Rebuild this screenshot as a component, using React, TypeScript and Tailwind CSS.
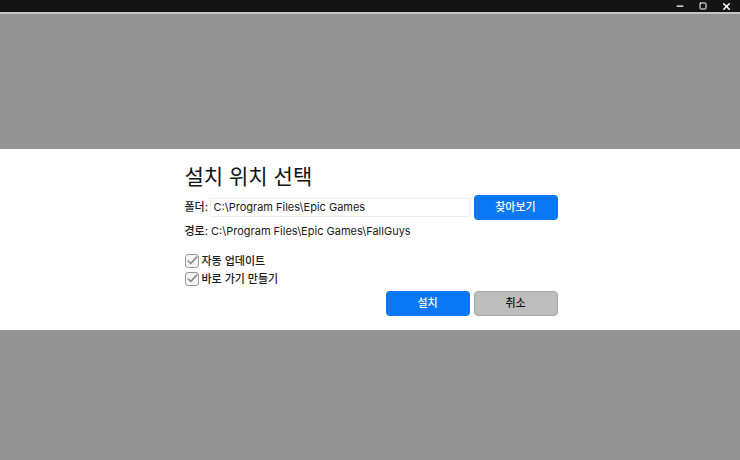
import { Minus, Square, X } from 'lucide-react';

function Check() {
  return (
    <span className="flex items-center justify-center w-[14px] h-[14px] rounded-[3px] border border-[#9a9a9a] bg-[#f4f4f4]">
      <svg viewBox="0 0 14 14" className="w-[12px] h-[12px]">
        <path d="M2.5 7 L5.5 10 L12.5 2.5" fill="none" stroke="#8a8a8a" strokeWidth="1.8" strokeLinecap="round" strokeLinejoin="round" />
      </svg>
    </span>
  );
}

export default function App() {
  const font = { fontFamily: 'Inter, "Noto Sans CJK KR", sans-serif' };
  return (
    <div className="w-[740px] h-[460px] flex flex-col bg-[#939393] overflow-hidden" style={font}>
      {/* title bar */}
      <div className="h-[12px] bg-[#141414] flex justify-end items-center gap-[14px] pr-[8px] text-white">
        <Minus className="w-[10px] h-[10px]" strokeWidth={3} />
        <Square className="w-[8px] h-[8px]" strokeWidth={3} />
        <X className="w-[11px] h-[11px]" strokeWidth={3.5} />
      </div>
      <div className="h-[2px] bg-[#c4c4c4]" />

      <div className="h-[135px]" />

      {/* dialog band */}
      <div className="h-[181px] bg-white flex justify-center">
        <div className="w-[373px] pt-[13px] flex flex-col text-[11px] text-[#1a1a1a] ml-[2px]">
          <h1 className="text-[21px] leading-[30px] text-[#111]">설치 위치 선택</h1>
          <div className="flex items-center mt-[3px] h-[25px]">
            <span className="w-[25px] font-medium">폴더:</span>
            <div className="w-[260px] h-[19px] border border-[#eeeeee] flex items-center pl-[3px]">C:\Program Files\Epic Games</div>
            <button className="ml-[4px] w-[84px] h-[25px] rounded-[4px] bg-[#0a78f5] text-white text-[11px] font-medium">찾아보기</button>
          </div>
          <div className="mt-[4px] h-[14px] flex items-center"><span className="font-medium mr-[3px]">경로:</span>C:\Program Files\Epic Games\FallGuys</div>
          <div className="mt-[16px] flex flex-col gap-[4px] font-medium">
            <div className="flex items-center gap-[3px] h-[14px]"><Check />자동 업데이트</div>
            <div className="flex items-center gap-[3px] h-[14px]"><Check />바로 가기 만들기</div>
          </div>
          <div className="flex justify-end gap-[4px] mt-[5px]">
            <button className="w-[84px] h-[25px] rounded-[4px] bg-[#0a78f5] text-white text-[11px] font-medium">설치</button>
            <button className="w-[84px] h-[25px] rounded-[4px] bg-[#bdbdbd] border border-[#a8a8a8] text-[#111] text-[11px] font-medium">취소</button>
          </div>
        </div>
      </div>

      <div className="flex-1" />
    </div>
  );
}
